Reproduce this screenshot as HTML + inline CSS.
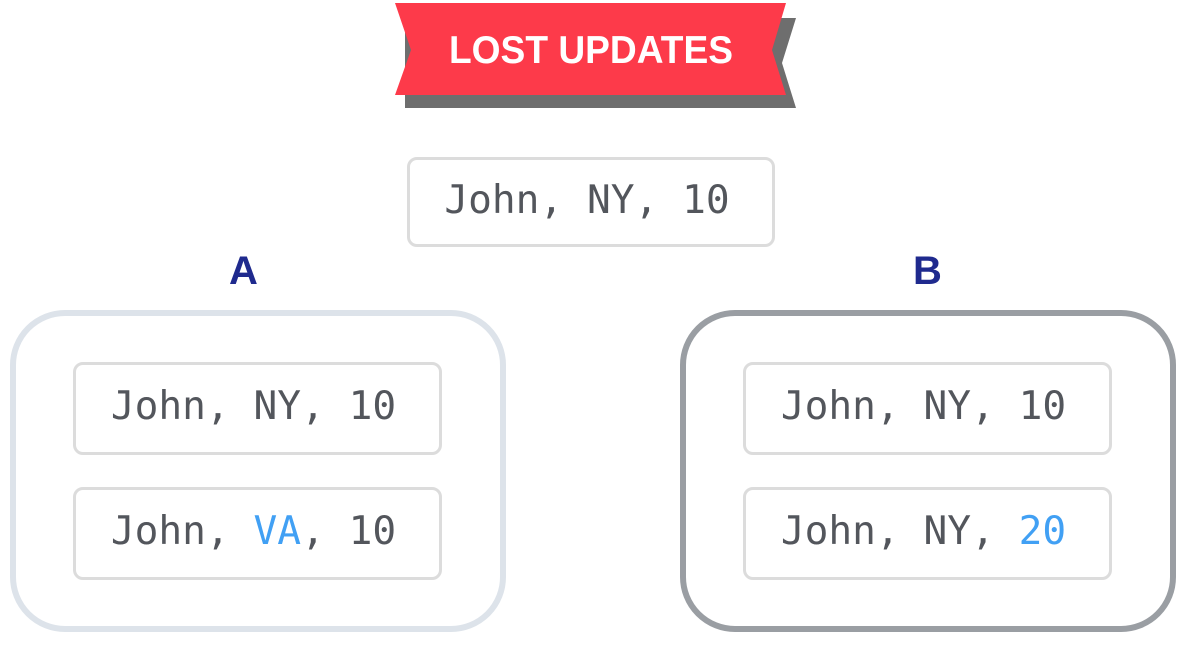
<!DOCTYPE html>
<html><head><meta charset="utf-8"><style>
html,body{margin:0;padding:0;background:#fff;}
body{width:1191px;height:660px;position:relative;overflow:hidden;font-family:"Liberation Sans",sans-serif;}
.box{position:absolute;box-sizing:border-box;border:3px solid #dcdcdc;border-radius:10px;background:#fff;
 font-family:"DejaVu Sans Mono","Liberation Mono",monospace;font-size:39.5px;color:#53565c;text-align:center;display:flex;align-items:center;justify-content:center;padding-right:8px;padding-bottom:5px;}
.big{position:absolute;box-sizing:border-box;border:6px solid #dde3ea;border-radius:55px;}
.lbl{position:absolute;font-weight:bold;font-size:40px;color:#1f2a8e;line-height:1;}
.b{color:#41a0f4;}
</style></head><body>
<svg style="position:absolute;left:0;top:0" width="1191" height="130">
<polygon points="405,18 796,18 782,63 796,108 405,108" fill="#6e6e6e"/>
<polygon points="395,3 786,3 772,50 786,95 395,95 411,50" fill="#fd3a4a"/>
<text x="449" y="63" textLength="284" lengthAdjust="spacingAndGlyphs" font-family="Liberation Sans" font-weight="bold" font-size="39" fill="#fff">LOST UPDATES</text>
</svg>
<div class="box" style="left:407px;top:157px;width:368px;height:90px;">John, NY, 10</div>
<div class="lbl" style="left:229px;top:251px;">A</div>
<div class="lbl" style="left:913px;top:251px;">B</div>
<div class="big" style="left:10px;top:310px;width:496px;height:322px;"></div>
<div class="big" style="left:680px;top:310px;width:496px;height:322px;border-color:#9a9ea3;"></div>
<div class="box" style="left:73px;top:362px;width:369px;height:93px;">John, NY, 10</div>
<div class="box" style="left:73px;top:487px;width:369px;height:93px;">John,&nbsp;<span class="b">VA</span>, 10</div>
<div class="box" style="left:743px;top:362px;width:369px;height:93px;">John, NY, 10</div>
<div class="box" style="left:743px;top:487px;width:369px;height:93px;">John, NY,&nbsp;<span class="b">20</span></div>
</body></html>
